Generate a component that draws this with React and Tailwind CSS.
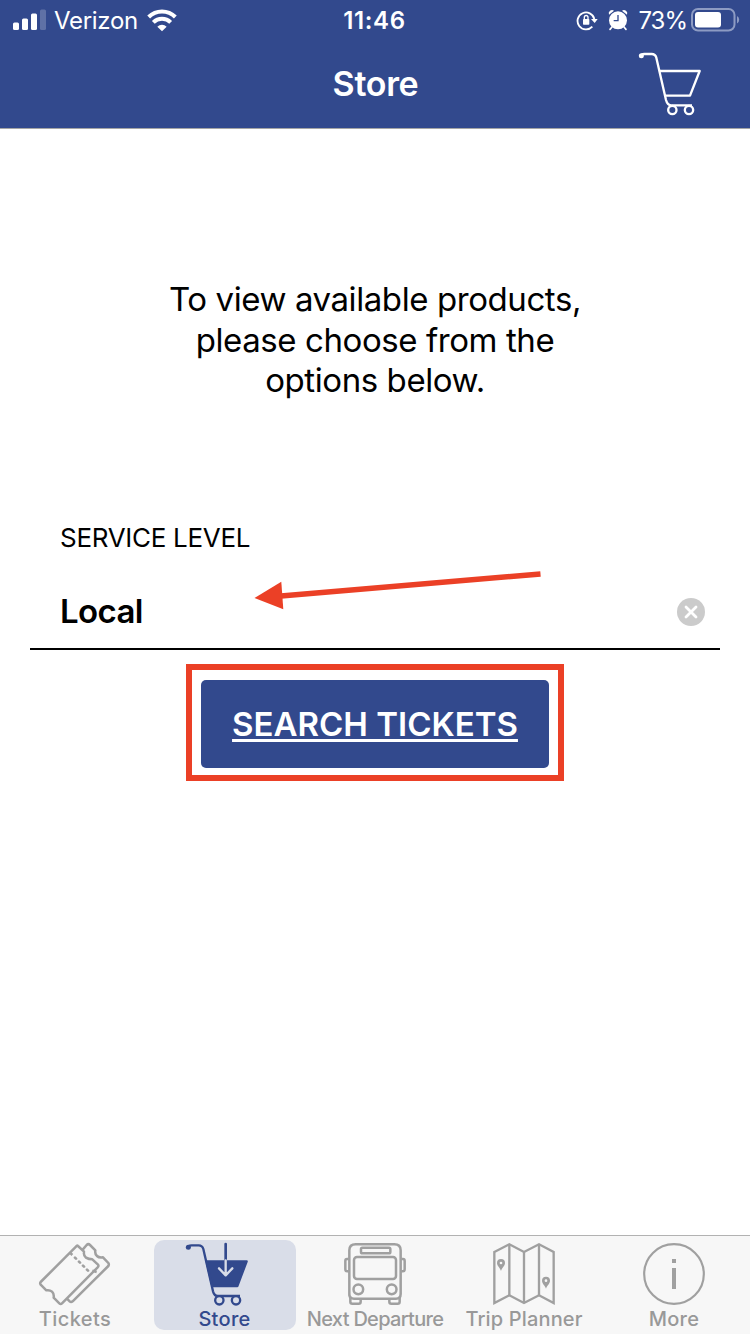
import clsx from "clsx"

const SignalIcon = () => (
  <svg width="33" height="22" viewBox="0 0 33 22" fill="#fff">
    <rect x="0" y="13.5" width="6" height="7.5" rx="1.5" />
    <rect x="9" y="9.5" width="6" height="11.5" rx="1.5" />
    <rect x="18" y="4.5" width="6" height="16.5" rx="1.5" />
    <rect x="27" y="0.5" width="6" height="20.5" rx="1.5" opacity="0.22" />
  </svg>
)

const WifiIcon = () => (
  <svg width="30" height="24" viewBox="0 0 90 72" fill="none" stroke="#fff" strokeWidth="12">
    <path d="M5 27 A57 57 0 0 1 85 27" />
    <path d="M19 43 A37 37 0 0 1 71 43" />
    <path d="M45 70 L31 56 A20 20 0 0 1 59 56 Z" fill="#fff" stroke="none" />
  </svg>
)

const RotationLockIcon = () => (
  <svg width="22" height="22" viewBox="0 0 66 66" fill="none" stroke="#fff" strokeWidth="5.5">
    <path d="M49 53 A25.5 25.5 0 1 1 55 30" />
    <path d="M45 30 L65 30 L56 42 Z" fill="#fff" stroke="none" />
    <rect x="21" y="30" width="19" height="17" rx="2" fill="#fff" stroke="none" />
    <path d="M25 31 V25 A5.5 5.5 0 0 1 36 25 V31" strokeWidth="4" />
  </svg>
)

const AlarmIcon = () => (
  <svg width="20" height="22" viewBox="0 0 60 66">
    <path d="M3 17 A10 10 0 0 1 18 5 Z" fill="#fff" />
    <path d="M57 17 A10 10 0 0 0 42 5 Z" fill="#fff" />
    <path d="M12 54 L6 61 M48 54 L54 61" stroke="#fff" strokeWidth="5" strokeLinecap="round" />
    <circle cx="30" cy="34" r="27" fill="#fff" />
    <path d="M30 18 V35 H17" fill="none" stroke="#32498d" strokeWidth="4" />
  </svg>
)

const BatteryIcon = () => (
  <svg width="49" height="24" viewBox="0 0 49 24">
    <rect x="1" y="1" width="42.5" height="21.5" rx="6" fill="none" stroke="#8d9bc3" strokeWidth="2" />
    <rect x="4" y="4" width="26" height="15.5" rx="3" fill="#fff" />
    <path d="M46 8 Q48.2 9 48.2 11.8 Q48.2 14.5 46 15.5 Z" fill="#8d9bc3" />
  </svg>
)

const CartIcon = () => (
  <svg width="67" height="65" viewBox="231 153 201 195" fill="none" stroke="#fff" strokeWidth="7" strokeLinejoin="round">
    <path d="M244 165 Q248 162 253 162 H275 Q286 162 289 173 L318 300 Q322 315 333 316 H396" />
    <circle cx="244" cy="167" r="7.5" fill="#fff" stroke="none" />
    <path d="M299 213 H419 L390 287 H316" />
    <circle cx="337" cy="330" r="12.5" fill="#32498d" />
    <circle cx="387" cy="330" r="12.5" fill="#32498d" />
  </svg>
)

const TicketsIcon = () => (
  <svg width="150" height="66" viewBox="0 45 450 198" fill="none" stroke="#a0a0a0" strokeWidth="7.5" strokeLinejoin="round">
    <path d="M234 63 L252 80 Q250 92 258 98 Q266 103 277 103 L294 119 Q297 122 293 127 L186 235 Q182 239 178 235 L161 218 Q163 207 156 200 Q149 194 139 196 L122 179 Q119 175 122 171 L228 65 Q231 60 234 63 Z" />
    <path d="M248 74 L260 60 Q265 55 270 60 L286 76 Q284 87 291 93 Q297 99 309 97 L325 114 Q328 118 325 123 L218 229 Q213 233 209 229 L200 220" />
    <path d="M211 84 L217 90 M277 137 L290 141" />
    <path d="M225 98 L228 101 M237 110 L240 113 M249 122 L252 125 M261 134 L264 137" strokeWidth="8" strokeLinecap="round" />
  </svg>
)

const StoreIcon = () => (
  <svg width="150" height="66" viewBox="0 45 450 198" fill="none" stroke="#32498d" strokeWidth="7" strokeLinejoin="round">
    <path d="M115 64 Q119 61 125 61 H146 Q157 61 160 72 L189 199 Q193 213 203 213 H270" />
    <circle cx="115" cy="67" r="7.5" fill="#32498d" stroke="none" />
    <path d="M170 109 H290 L262 183 H187 Z" fill="#32498d" />
    <circle cx="208" cy="226" r="12.5" fill="#d9dde8" />
    <circle cx="258" cy="226" r="12.5" fill="#d9dde8" />
    <path d="M227 57 V106" strokeWidth="8" strokeLinecap="round" />
    <path d="M227 106 V150 M207 130 L227 151 L247 130" stroke="#d9dde8" strokeWidth="7" strokeLinecap="round" />
  </svg>
)

const BusIcon = () => (
  <svg width="150" height="66" viewBox="0 45 450 198" fill="none" stroke="#a0a0a0" strokeWidth="7.5">
    <path d="M148 212 V76 Q148 58 167 58 H283 Q302 58 302 76 V207 Q302 221 288 221 H162 Q148 221 148 207" />
    <rect x="183" y="68" width="88" height="17" rx="4" />
    <rect x="162" y="96" width="126" height="66" rx="9" />
    <circle cx="175" cy="193" r="14.5" />
    <circle cx="275" cy="193" r="14.5" />
    <path d="M146 102 H141 Q136 102 136 108 V133 Q136 139 141 139 H146 M304 102 H309 Q314 102 314 108 V133 Q314 139 309 139 H304" />
    <path d="M151 216 V230 Q151 236 157 236 H176 Q182 236 182 230 V222 M268 222 V230 Q268 236 274 236 H293 Q299 236 299 230 V216" />
  </svg>
)

const Pin = ({ x, y }) => (
  <g transform={`translate(${x} ${y})`} stroke="none">
    <path d="M0 24 C-3 14 -12 9 -12 0 A12 12 0 0 1 12 0 C12 9 3 14 0 24 Z" fill="#a0a0a0" />
    <circle r="4" fill="#f7f7f7" />
  </g>
)

const MapIcon = () => (
  <svg width="150" height="66" viewBox="0 45 450 198" fill="none" stroke="#a0a0a0" strokeWidth="7">
    <path d="M133 81 L178 58 L222 81 L267 58 L311 81 V234 L267 211 L222 234 L178 211 L133 234 Z" />
    <path d="M178 58 V211 M222 81 V234 M267 58 V211" />
    <Pin x={153} y={114} />
    <Pin x={288} y={167} />
  </svg>
)

const InfoIcon = () => (
  <svg width="150" height="66" viewBox="0 45 450 198" fill="none" stroke="#a0a0a0" strokeWidth="6.5">
    <circle cx="222" cy="147" r="89.5" />
    <rect x="216" y="102" width="12" height="12" fill="#a0a0a0" stroke="none" />
    <rect x="216" y="129" width="12" height="63" fill="#a0a0a0" stroke="none" />
  </svg>
)

const tabs = [
  { label: "Tickets", Icon: TicketsIcon, text: "tracking-[0.4px]" },
  { label: "Store", Icon: StoreIcon, text: "tracking-[0.3px] pr-px", active: true },
  { label: "Next Departure", Icon: BusIcon, text: "tracking-[-0.7px]" },
  { label: "Trip Planner", Icon: MapIcon, text: "tracking-[0.15px] pr-[2px]" },
  { label: "More", Icon: InfoIcon, text: "tracking-[0.3px] pr-[2px]" }
]

const StatusBar = () => (
  <div className="flex h-10 items-center justify-between pl-[13px] pr-[10px] text-[24px] leading-10">
    <div className="flex w-[266px] items-center">
      <SignalIcon />
      <span className="ml-[8px] w-[93px] pt-[2px] tracking-[-0.3px]">Verizon</span>
      <WifiIcon />
    </div>
    <span className="pt-[2px] font-semibold tracking-[0.6px]">11:46</span>
    <div className="flex w-[270px] items-center justify-end">
      <RotationLockIcon />
      <span className="ml-[10px]"><AlarmIcon /></span>
      <span className="ml-[10px] mr-[4px] whitespace-nowrap pt-[2px] tracking-[-1px]">73%</span>
      <BatteryIcon />
    </div>
  </div>
)

const TabBar = () => (
  <nav className="grid h-[99px] grid-cols-5 border-t border-[#b2b2b2] bg-[#f7f7f7] pt-1">
    {tabs.map(({ label, Icon, text, active }) => (
      <button key={label} className="flex h-[90px] justify-center">
        <div
          className={clsx(
            "flex h-[90px] w-[142px] flex-col items-center rounded-[10px]",
            active ? "bg-[#d9dde8] text-[#32498d]" : "text-[#999999]"
          )}
        >
          <div className="flex w-[150px] shrink-0">
            <Icon />
          </div>
          <span className={clsx("mt-px whitespace-nowrap text-[20px] font-medium leading-6", text)}>{label}</span>
        </div>
      </button>
    ))}
  </nav>
)

const App = () => {
  return (
    <div className="relative flex h-[1334px] w-[750px] flex-col overflow-hidden bg-white font-['Inter',sans-serif] text-black">
      <header className="h-[129px] border-b border-[#a5a5a5] bg-[#32498d] text-white">
        <StatusBar />
        <div className="grid h-[88px] grid-cols-[1fr_auto_1fr] items-center">
          <span />
          <h1 className="pl-px text-[34px] font-semibold leading-10 tracking-[-0.3px]">Store</h1>
          <button className="mr-[46px] justify-self-end pb-px">
            <CartIcon />
          </button>
        </div>
      </header>

      <main className="flex flex-1 flex-col items-center pt-[150px]">
        <p className="whitespace-nowrap text-center text-[33px] leading-[40.5px] tracking-[-0.42px]">
          To view available products,
          <br />
          please choose from the
          <br />
          options below.
        </p>

        <div className="mt-[117.5px] w-[690px] border-b-2 border-black pl-[30px] pr-[15px]">
          <label className="block text-[26px] leading-10 tracking-[-0.3px]">SERVICE LEVEL</label>
          <div className="mt-[18px] flex h-[72px] items-center justify-between">
            <span className="pb-[2px] text-[33px] font-semibold leading-10 tracking-[-0.6px]">Local</span>
            <svg width="28" height="28" viewBox="0 0 28 28">
              <circle cx="14" cy="14" r="14" fill="#cbcbcb" />
              <path d="M9 9 L19 19 M19 9 L9 19" stroke="#fff" strokeWidth="2.8" strokeLinecap="round" />
            </svg>
          </div>
        </div>

        <div className="mt-[14px] flex h-[117px] w-[378px] items-start justify-center border-[6px] border-[#eb4026] pt-[10px]">
          <button className="h-[88px] w-[348px] rounded-[5px] bg-[#32498d] pt-px text-[33px] font-semibold text-white underline decoration-[3px] underline-offset-[3px] [text-decoration-skip-ink:none]">
            SEARCH TICKETS
          </button>
        </div>
      </main>

      <TabBar />

      {/* arrow pointing at the selected service level */}
      <svg className="absolute left-[250px] top-[565px]" width="296" height="50" viewBox="250 565 296 50">
        <path d="M281 596 L540.5 574" stroke="#eb4026" strokeWidth="5.5" />
        <path d="M254.5 598 L281.3 581.7 L283.3 609.3 Z" fill="#eb4026" />
      </svg>
    </div>
  )
}

export default App
